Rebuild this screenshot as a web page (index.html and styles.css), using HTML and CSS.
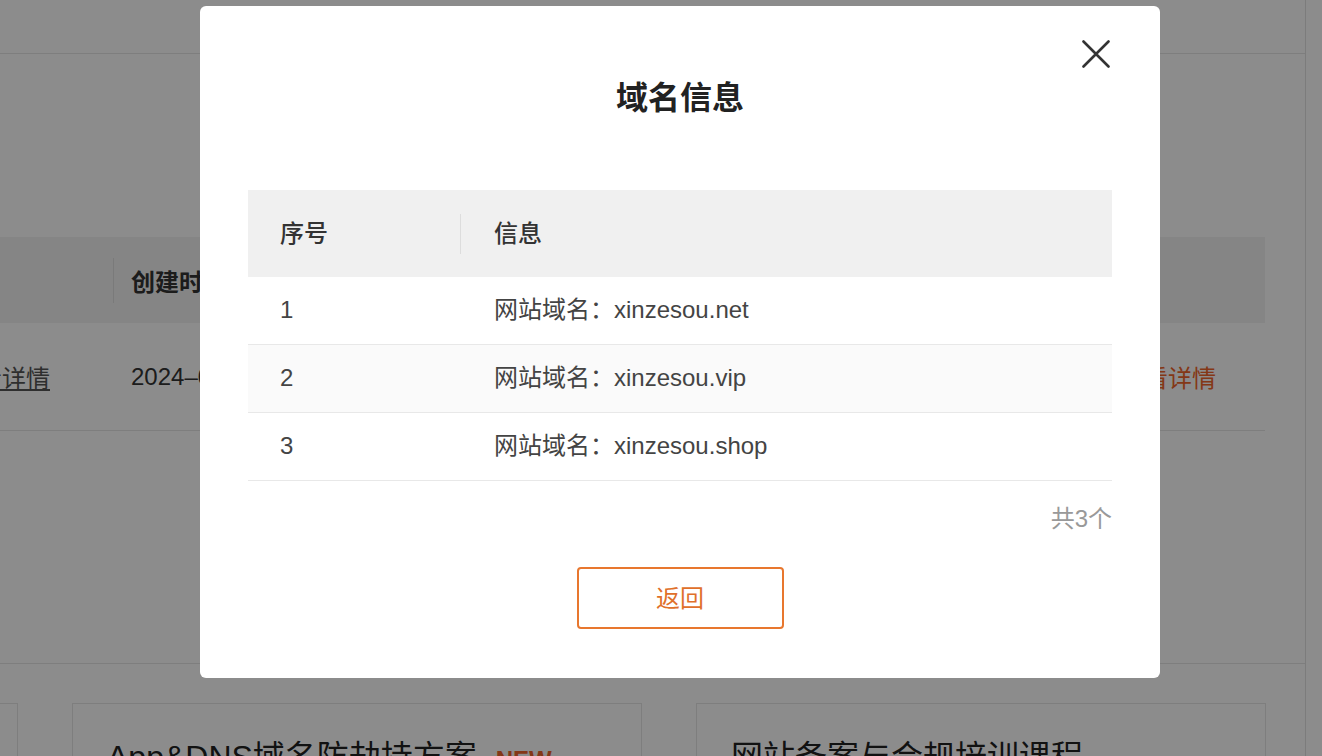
FILE: index.html
```html
<!DOCTYPE html>
<html lang="zh-CN">
<head>
    <meta charset="UTF-8">
    <meta name="viewport" content="width=device-width, initial-scale=1.0">
    <title>域名信息</title>

    <link rel="stylesheet" href="styles.css">
</head>
<body>
    <div class="page">
        <div class="page-top"></div>

        <div class="record">
            <div class="rec-table">
                <div class="rec-head">
                    <span class="rc c1"></span>
                    <span class="rc c2">创建时间</span>
                    <span class="rc c3"></span>
                </div>
                <div class="rec-row">
                    <span class="rc c1"><a class="link-gray">查看详情</a></span>
                    <span class="rc c2">2024–03–18</span>
                    <span class="rc c3"><a class="link-orange">查看详情</a></span>
                </div>
            </div>
        </div>

        <div class="cards">
            <div class="card"><div class="card-title">域名安全防护服务</div></div>
            <div class="card"><div class="card-title">App&amp;DNS域名防劫持方案 <span class="new">NEW</span></div></div>
            <div class="card"><div class="card-title">网站备案与合规培训课程</div></div>
        </div>
    </div>

    <!-- modal -->
    <div class="mask"></div>
    <div class="modal">
        <button class="modal-close" aria-label="关闭">
            <svg width="28" height="28" viewBox="0 0 28 28">
                <path d="M1.5 1.5 L26.5 26.5 M26.5 1.5 L1.5 26.5" stroke="#333" stroke-width="2.6" stroke-linecap="round" fill="none"/>
            </svg>
        </button>
        <h2 class="modal-title">域名信息</h2>

        <div class="dtable">
            <div class="dt-head">
                <div class="dt-cell dt-no">序号</div>
                <div class="dt-cell dt-info">信息</div>
            </div>
            <div class="dt-row">
                <div class="dt-cell dt-no">1</div>
                <div class="dt-cell dt-info">网站域名：xinzesou.net</div>
            </div>
            <div class="dt-row alt">
                <div class="dt-cell dt-no">2</div>
                <div class="dt-cell dt-info">网站域名：xinzesou.vip</div>
            </div>
            <div class="dt-row">
                <div class="dt-cell dt-no">3</div>
                <div class="dt-cell dt-info">网站域名：xinzesou.shop</div>
            </div>
        </div>

        <div class="dt-total">共3个</div>
        <button class="btn-back">返回</button>
    </div>
</body>
</html>
```

FILE: styles.css
```css
html, body {
    margin: 0;
    height: 756px;
    overflow: hidden;
}
body {
    font-family: "Liberation Sans", "Noto Sans CJK SC", sans-serif;
    background-color: #fff;
    color: #333;
}

/* page behind the mask */
.page {
    width: 1306px;
    height: 756px;
    box-sizing: border-box;
    border-right: 1px solid #e2e2e2;
}
.page-top {
    height: 53px;
    border-bottom: 1px solid #e6e6e6;
}
.record {
    height: 610px;
    padding-top: 183px;
    box-sizing: border-box;
    border-bottom: 1px solid #e6e6e6;
}
.rec-table {
    margin-left: -60px;
    width: 1325px;
}
.rec-head, .rec-row {
    display: grid;
    grid-template-columns: 174px 1fr 150px;
    align-items: center;
}
.rec-head {
    height: 86px;
    background-color: #f2f2f2;
    font-size: 24px;
    font-weight: 700;
}
.rec-head .c1 {
    height: 45px;
    border-right: 1px solid #dedede;
}
.rec-row {
    height: 107px;
    border-bottom: 1px solid #e6e6e6;
    font-size: 24px;
}
.rc {
    white-space: nowrap;
    overflow: hidden;
}
.c1 {
    padding-left: 14px;
}
.c2 {
    padding-left: 17px;
}
.c3 {
    padding-left: 5px;
}
.link-gray {
    color: #555;
    text-decoration: underline;
}
.link-orange {
    color: #f0652a;
}
.cards {
    display: flex;
    gap: 54px;
    margin-left: -552px;
    padding-top: 39px;
}
.card {
    flex: none;
    width: 570px;
    height: 200px;
    box-sizing: border-box;
    border: 1px solid #e6e6e6;
    padding: 34px 34px 0;
}
.card-title {
    font-size: 32px;
    line-height: 38px;
    color: #222;
    white-space: nowrap;
}
.new {
    margin-left: 10px;
    font-size: 24px;
    font-weight: 700;
    color: #f0652a;
}

/* modal */
.mask {
    position: fixed;
    inset: 0;
    background-color: rgba(0, 0, 0, 0.45);
}
.modal {
    position: fixed;
    top: 6px;
    left: 200px;
    width: 960px;
    height: 672px;
    box-sizing: border-box;
    padding: 72px 48px 49px;
    background-color: #fff;
    border-radius: 6px;
}
.modal-close {
    position: absolute;
    top: 34px;
    right: 50px;
    width: 28px;
    height: 28px;
    padding: 0;
    border: none;
    background: none;
    cursor: pointer;
}
.modal-close svg {
    display: block;
}
.modal-title {
    margin: 0 0 72px;
    font-size: 32px;
    line-height: 40px;
    font-weight: 700;
    color: #222;
    text-align: center;
}
.dtable {
    width: 864px;
}
.dt-head {
    display: flex;
    align-items: center;
    height: 87px;
    background-color: #f0f0f0;
    font-weight: 500;
    color: #333;
}
.dt-row {
    display: flex;
    align-items: center;
    height: 68px;
    box-sizing: border-box;
    border-bottom: 1px solid #e8e8e8;
    color: #444;
}
.dt-row.alt {
    background-color: #fafafa;
}
.dt-cell {
    font-size: 24px;
    line-height: 40px;
}
.dt-row .dt-cell {
    margin-top: -2px;
}
.dt-no {
    width: 213px;
    padding-left: 32px;
    box-sizing: border-box;
}
.dt-head .dt-no {
    border-right: 1px solid #dddddd;
}
.dt-info {
    padding-left: 33px;
}
.dt-total {
    margin-top: 23px;
    font-size: 24px;
    line-height: 30px;
    color: #999;
    text-align: right;
}
.btn-back {
    display: block;
    margin: 33px auto 0;
    width: 207px;
    height: 62px;
    padding-bottom: 4px;
    border: 2px solid #e8772e;
    border-radius: 4px;
    background-color: #fff;
    color: #e0702a;
    font-family: "Liberation Sans", "Noto Sans CJK SC", sans-serif;
    font-size: 24px;
    cursor: pointer;
}
```
